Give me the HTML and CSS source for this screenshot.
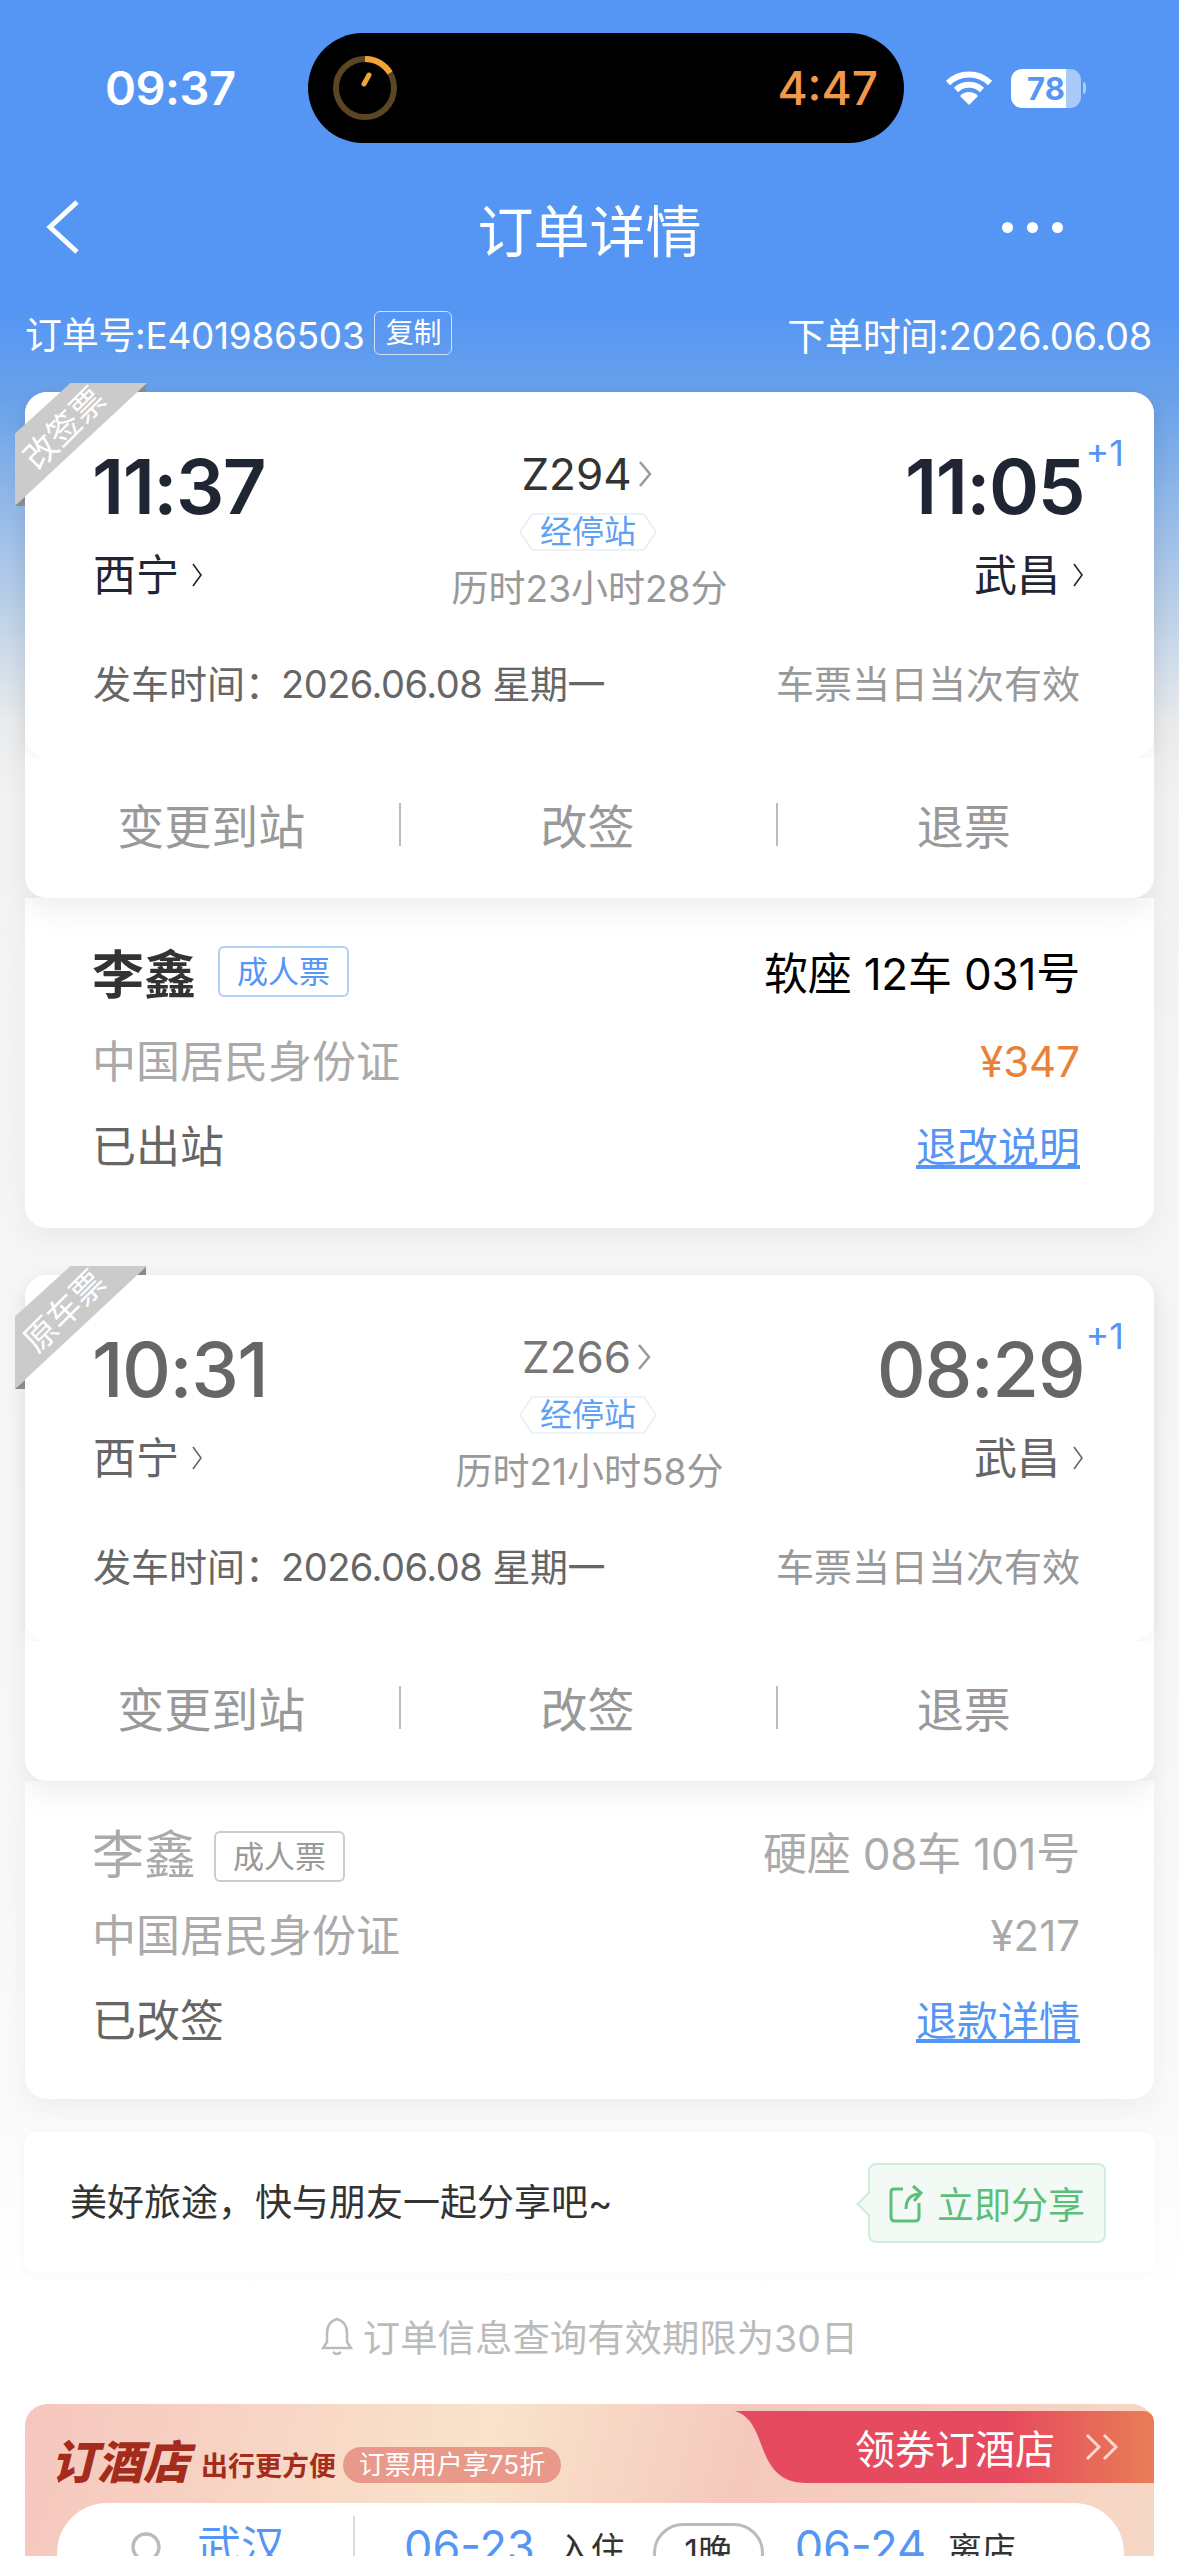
FILE: index.html
```html
<!DOCTYPE html>
<html>
<head>
    <meta charset="utf-8">
    <title>订单详情</title>
    <link rel="stylesheet" href="styles.css">
</head>
<body>
    <div class="page">
        <div class="status-bar">
            <span class="clock">09:37</span>
            <div class="island">
                <svg class="timer" width="66" height="66" viewBox="0 0 66 66">
                    <circle cx="33" cy="33" r="29" fill="none" stroke="#5a4524" stroke-width="6"/>
                    <path d="M33 4 A29 29 0 0 1 58 18" fill="none" stroke="#f2a33a" stroke-width="6"/>
                    <path d="M37 20 L32 29" fill="none" stroke="#f2a33a" stroke-width="5" stroke-linecap="round"/>
                </svg>
                <span class="timer-text">4:47</span>
            </div>
            <div class="status-right">
                <svg width="48" height="36" viewBox="0 0 48 36">
                    <path d="M3 13 A30 30 0 0 1 45 13" fill="none" stroke="#fff" stroke-width="6"/>
                    <path d="M11 20 A19 19 0 0 1 37 20" fill="none" stroke="#fff" stroke-width="6"/>
                    <path d="M24 35 L15 26 A12 12 0 0 1 33 26 Z" fill="#fff"/>
                </svg>
                <div class="battery"><span class="battery-num">78</span></div>
                <span class="battery-cap"></span>
            </div>
        </div>

        <div class="nav">
            <svg class="nav-back" width="36" height="54" viewBox="0 0 36 54">
                <path d="M32 2 L5 27 L32 52" fill="none" stroke="#fff" stroke-width="5"/>
            </svg>
            <h1 class="nav-title">订单详情</h1>
            <div class="nav-more"><i></i><i></i><i></i></div>
        </div>

        <div class="order-row">
            <div class="order-no">订单号:E401986503<span class="copy-tag">复制</span></div>
            <div class="order-time">下单时间:2026.06.08</div>
        </div>

        <div class="main">
            <!-- 改签票 -->
            <section class="ticket">
                <div class="ribbon"><div class="ribbon-band"></div><span>改签票</span></div>
                <div class="ticket-head">
                    <div class="trip">
                        <div class="side">
                            <div class="time">11:37</div>
                            <div class="station">西宁<svg class="chev" width="12" height="26" viewBox="0 0 12 26"><path d="M2 2 L10 13 L2 24" fill="none" stroke="currentColor" stroke-width="1.6"/></svg></div>
                        </div>
                        <div class="middle">
                            <div class="train">Z294<svg class="chev-gray" width="14" height="28" viewBox="0 0 14 28"><path d="M2 2 L12 14 L2 26" fill="none" stroke="#999" stroke-width="2.5"/></svg></div>
                            <div class="stops">
                                <svg class="stops-bg" width="140" height="38" viewBox="0 0 140 38"><path d="M14 1 H126 L138 19 L126 37 H14 L2 19 Z" fill="#fff" stroke="#e4eef9" stroke-width="1.5"/></svg>
                                <span>经停站</span>
                            </div>
                            <div class="duration">历时23小时28分</div>
                        </div>
                        <div class="side side-right">
                            <div class="time">11:05<span class="plus">+1</span></div>
                            <div class="station">武昌<svg class="chev" width="12" height="26" viewBox="0 0 12 26"><path d="M2 2 L10 13 L2 24" fill="none" stroke="currentColor" stroke-width="1.6"/></svg></div>
                        </div>
                    </div>
                    <div class="date-row">
                        <span class="date">发车时间：<span class="date-val">2026.06.08 星期一</span></span>
                        <span class="valid">车票当日当次有效</span>
                    </div>
                </div>
                <div class="actions">
                    <span>变更到站</span>
                    <span>改签</span>
                    <span>退票</span>
                </div>
            </section>
            <section class="passenger">
                <div class="pass-row pass-top">
                    <div class="pass-name"><b>李鑫</b><span class="pass-tag">成人票</span></div>
                    <div class="seat">软座 12车 031号</div>
                </div>
                <div class="pass-row">
                    <span class="idtype">中国居民身份证</span>
                    <span class="price">¥347</span>
                </div>
                <div class="pass-row">
                    <span class="state">已出站</span>
                    <a class="link">退改说明</a>
                </div>
            </section>

            <!-- 原车票 -->
            <section class="ticket ticket-old">
                <div class="ribbon"><div class="ribbon-band"></div><span>原车票</span></div>
                <div class="ticket-head">
                    <div class="trip">
                        <div class="side">
                            <div class="time">10:31</div>
                            <div class="station">西宁<svg class="chev" width="12" height="26" viewBox="0 0 12 26"><path d="M2 2 L10 13 L2 24" fill="none" stroke="currentColor" stroke-width="1.6"/></svg></div>
                        </div>
                        <div class="middle">
                            <div class="train">Z266<svg class="chev-gray" width="14" height="28" viewBox="0 0 14 28"><path d="M2 2 L12 14 L2 26" fill="none" stroke="#999" stroke-width="2.5"/></svg></div>
                            <div class="stops">
                                <svg class="stops-bg" width="140" height="38" viewBox="0 0 140 38"><path d="M14 1 H126 L138 19 L126 37 H14 L2 19 Z" fill="#fff" stroke="#e4eef9" stroke-width="1.5"/></svg>
                                <span>经停站</span>
                            </div>
                            <div class="duration">历时21小时58分</div>
                        </div>
                        <div class="side side-right">
                            <div class="time">08:29<span class="plus">+1</span></div>
                            <div class="station">武昌<svg class="chev" width="12" height="26" viewBox="0 0 12 26"><path d="M2 2 L10 13 L2 24" fill="none" stroke="currentColor" stroke-width="1.6"/></svg></div>
                        </div>
                    </div>
                    <div class="date-row">
                        <span class="date">发车时间：<span class="date-val">2026.06.08 星期一</span></span>
                        <span class="valid">车票当日当次有效</span>
                    </div>
                </div>
                <div class="actions">
                    <span>变更到站</span>
                    <span>改签</span>
                    <span>退票</span>
                </div>
            </section>
            <section class="passenger passenger-old">
                <div class="pass-row pass-top">
                    <div class="pass-name"><b>李鑫</b><span class="pass-tag">成人票</span></div>
                    <div class="seat">硬座 08车 101号</div>
                </div>
                <div class="pass-row">
                    <span class="idtype">中国居民身份证</span>
                    <span class="price">¥217</span>
                </div>
                <div class="pass-row">
                    <span class="state">已改签</span>
                    <a class="link">退款详情</a>
                </div>
            </section>

            <section class="share">
                <span class="share-text">美好旅途，快与朋友一起分享吧~</span>
                <div class="share-btn">
                    <svg width="36" height="40" viewBox="0 0 36 40">
                        <path d="M14 6 H5 Q2 6 2 9 V34 Q2 38 6 38 H26 Q30 38 30 34 V20" fill="none" stroke="#5bbf7b" stroke-width="3"/>
                        <path d="M17 26 Q17 12 30 11 M24 3 L32 10 L25 18" fill="none" stroke="#5bbf7b" stroke-width="3"/>
                    </svg>
                    立即分享
                </div>
            </section>

            <div class="note">
                <svg width="32" height="40" viewBox="0 0 32 40">
                    <path d="M16 3 Q6 6 6 17 V26 L2 32 H30 L26 26 V17 Q26 6 16 3 Z" fill="none" stroke="#bbb" stroke-width="2.5"/>
                    <path d="M12 36 Q16 40 20 36" fill="none" stroke="#bbb" stroke-width="2.5"/>
                </svg>
                订单信息查询有效期限为30日
            </div>

            <section class="hotel">
                <div class="hotel-head">
                    <div class="hotel-title">
                        <span class="hotel-logo">订酒店</span>
                        <span class="hotel-sub">出行更方便</span>
                        <span class="hotel-badge">订票用户享75折</span>
                    </div>
                    <div class="hotel-go">
                        <svg class="hotel-curve" width="90" height="72" viewBox="0 0 90 72"><path d="M0 0 H90 V72 H72 C38 72 32 48 24 28 C18 12 12 4 0 0 Z" fill="#e64a5e"/></svg>
                        <div class="hotel-go-body">
                            领券订酒店
                            <svg width="36" height="30" viewBox="0 0 36 30"><path d="M3 3 L15 15 L3 27 M20 3 L32 15 L20 27" fill="none" stroke="#fbd6cf" stroke-width="3"/></svg>
                        </div>
                    </div>
                </div>
                <div class="hotel-search">
                    <svg class="hotel-lens" width="32" height="40" viewBox="0 0 32 40"><circle cx="16" cy="18" r="13" fill="none" stroke="#bbb" stroke-width="3.5"/></svg>
                    <span class="hotel-city">武汉</span>
                    <span class="hotel-line"></span>
                    <span class="hotel-day">06-23</span>
                    <span class="hotel-label">入住</span>
                    <span class="hotel-nights">1晚</span>
                    <span class="hotel-day">06-24</span>
                    <span class="hotel-label">离店</span>
                </div>
            </section>
        </div>
    </div>
</body>
</html>
```

FILE: styles.css
```css
* {
    box-sizing: border-box;
}

html, body {
    margin: 0;
    padding: 0;
}

body {
    font-family: Inter, "Noto Sans CJK SC", sans-serif;
}

.page {
    width: 1179px;
    height: 2556px;
    overflow: hidden;
    background: linear-gradient(180deg, #5596f4 0, #5596f4 310px, #6aa2ea 400px, #b9cfe9 600px, #e9ebed 720px, #f3f3f3 800px, #f6f6f6 1300px, #fafafa 2100px, #fff 2300px);
}

/* status bar */
.status-bar {
    height: 172px;
    padding: 33px 0 0 105px;
    display: flex;
    align-items: flex-start;
    color: #fff;
}

.clock {
    width: 203px;
    font-size: 47px;
    font-weight: 600;
    line-height: 110px;
    letter-spacing: -.5px;
}

.island {
    width: 596px;
    height: 110px;
    background: #000;
    border-radius: 55px;
    display: flex;
    align-items: center;
    justify-content: space-between;
    padding: 0 26px 0 24px;
}

.timer-text {
    color: #f2984a;
    font-size: 46px;
    font-weight: 500;
}

.status-right {
    margin-left: 41px;
    height: 110px;
    display: flex;
    align-items: center;
}

.battery {
    margin-left: 18px;
    width: 70px;
    height: 39px;
    border-radius: 11px;
    background: linear-gradient(90deg, #fff 0, #fff 78%, #a9c9f7 78%);
    color: #5596f4;
    font-size: 31px;
    font-weight: 700;
    text-align: center;
    line-height: 39px;
}

.battery-cap {
    margin-left: 2px;
    width: 3px;
    height: 12px;
    border-radius: 0 3px 3px 0;
    background: #a9c9f7;
}

/* nav */
.nav {
    height: 110px;
    padding: 0 45px;
    display: grid;
    grid-template-columns: 1fr auto 1fr;
    align-items: center;
    color: #fff;
}

.nav-title {
    margin: 0;
    font-size: 56px;
    font-weight: 400;
}

.nav-more {
    display: flex;
    gap: 14px;
    justify-self: end;
    margin-right: 71px;
}

.nav-more i {
    width: 11px;
    height: 11px;
    border-radius: 50%;
    background: #fff;
}

.order-row {
    height: 110px;
    padding: 0 27px 8px 25px;
    display: flex;
    align-items: center;
    justify-content: space-between;
    color: #fff;
    font-size: 37px;
    letter-spacing: -.3px;
}

.order-no {
    display: flex;
    align-items: center;
}

.order-time {
    font-size: 38px;
}

.copy-tag {
    margin-left: 10px;
    width: 78px;
    height: 44px;
    border: 1px solid #cfe1fb;
    border-radius: 6px;
    font-size: 28px;
    line-height: 42px;
    text-align: center;
}

/* cards */
.main {
    padding: 0 25px;
}

.ticket {
    position: relative;
    background: #fff;
    border-radius: 22px;
    box-shadow: 0 12px 30px rgba(0, 0, 0, .07);
}

.ribbon {
    position: absolute;
    z-index: 1;
    left: -10px;
    top: -9px;
    width: 132px;
    height: 123px;
}

.ribbon::before,
.ribbon::after {
    content: "";
    position: absolute;
    width: 10px;
    height: 9px;
    background: #8a8a8a;
}

.ribbon::before {
    right: 1px;
    top: 0;
    clip-path: polygon(0 100%, 100% 0, 100% 100%);
}

.ribbon::after {
    left: 0;
    bottom: 0;
    clip-path: polygon(0 100%, 100% 0, 100% 100%);
}

.ribbon-band {
    position: absolute;
    inset: 0;
    background: #cbcbcb;
    clip-path: polygon(42% 0, 100% 0, 0 100%, 0 41%);
}

.ribbon span {
    position: absolute;
    left: -11px;
    top: 22px;
    width: 120px;
    text-align: center;
    color: #fff;
    font-size: 33px;
    line-height: 46px;
    transform: rotate(-45deg);
}

.ticket-head {
    height: 366px;
    padding: 54px 74px 0 68px;
    border-radius: 22px;
    background: #fff;
    box-shadow: 0 4px 16px rgba(0, 0, 0, .05);
}

.trip {
    display: grid;
    grid-template-columns: 1fr auto 1fr;
    height: 190px;
}

.time {
    position: relative;
    left: -1px;
    color: #1f2532;
    font-size: 76px;
    font-weight: 600;
    line-height: 80px;
    letter-spacing: -1.5px;
}

.side-right .time {
    left: 0;
}

.ticket-old .time {
    color: #666;
    font-weight: 500;
}

.station {
    margin-top: 19px;
    display: flex;
    align-items: center;
    color: #1f2532;
    font-size: 43px;
    line-height: 60px;
}

.ticket-old .station {
    color: #666;
}

.chev {
    margin-left: 12px;
}

.side-right {
    text-align: right;
    margin-right: -4px;
}

.side-right .station {
    justify-content: flex-end;
}

.plus {
    position: absolute;
    right: -40px;
    top: -13px;
    color: #5596f4;
    font-size: 36px;
    font-weight: 400;
    line-height: 40px;
    letter-spacing: 0;
}

.middle {
    display: flex;
    flex-direction: column;
    align-items: center;
}

.train {
    display: flex;
    align-items: center;
    gap: 6px;
    height: 56px;
    color: #333;
    font-size: 44px;
}

.ticket-old .train {
    color: #777;
}

.stops {
    position: relative;
    width: 140px;
    height: 38px;
    margin-top: 11px;
    margin-left: 3px;
    text-align: center;
}

.stops-bg {
    position: absolute;
    left: 0;
    top: 0;
}

.stops span {
    position: relative;
    color: #5ea0f2;
    font-size: 32px;
    line-height: 38px;
}

.duration {
    margin: 13px 0 0 6px;
    color: #999;
    font-size: 37px;
    line-height: 50px;
}

.date-row {
    margin-top: 23px;
    display: flex;
    justify-content: space-between;
    font-size: 38px;
    line-height: 50px;
}

.date {
    color: #666;
}

.date-val {
    margin-left: -2px;
    letter-spacing: -.5px;
}

.valid {
    color: #999;
}

.actions {
    height: 140px;
    border-radius: 0 0 22px 22px;
    background: #fff;
    display: grid;
    grid-template-columns: 1fr 1fr 1fr;
    align-items: center;
    color: #999;
    font-size: 47px;
    text-align: center;
    padding-bottom: 9px;
}

.actions span {
    position: relative;
    padding: 0 12px 0 8px;
}

.actions span + span::before {
    content: "";
    position: absolute;
    left: -2px;
    top: 14px;
    bottom: 12px;
    width: 2px;
    background: #bbb;
}

.passenger {
    height: 330px;
    padding: 28px 74px 0 67px;
    background: #fff;
    border-radius: 0 0 22px 22px;
    box-shadow: 0 10px 30px rgba(0, 0, 0, .05);
}

.passenger-old {
    height: 318px;
    padding-top: 25px;
}

.pass-row {
    height: 85px;
    display: flex;
    align-items: center;
    justify-content: space-between;
    font-size: 44px;
}

.pass-top {
    height: 90px;
}

.passenger-old .pass-top {
    margin-bottom: -6px;
}

.pass-name {
    display: flex;
    align-items: center;
    color: #333;
}

.pass-name b {
    font-size: 52px;
    font-weight: 700;
}

.pass-tag {
    margin-left: 22px;
    width: 131px;
    height: 51px;
    border: 2px solid #afd0f9;
    border-radius: 6px;
    color: #5596f4;
    font-size: 31px;
    line-height: 47px;
    text-align: center;
}

.seat {
    color: #000;
    font-size: 44px;
    letter-spacing: -.2px;
}

.idtype {
    color: #aaa;
}

.price {
    position: relative;
    top: 3px;
    color: #ea8138;
    font-size: 42px;
}

.state {
    color: #666;
}

.link {
    color: #5596f4;
    font-size: 41px;
    text-decoration: underline;
}

.passenger-old .pass-name,
.passenger-old .seat,
.passenger-old .price,
.passenger-old .idtype {
    color: #aaa;
}

.passenger-old .pass-name b {
    font-weight: 400;
}

.passenger-old .pass-tag {
    position: relative;
    top: 5px;
    margin-left: 18px;
    border-color: #ccc;
    color: #999;
}

.passenger + .ticket {
    margin-top: 47px;
}

.share {
    margin: 33px -1px 0;
    height: 141px;
    padding: 0 49px 6px 46px;
    background: #fff;
    border-radius: 12px;
    box-shadow: 0 2px 8px rgba(0, 0, 0, .03);
    display: flex;
    align-items: center;
    justify-content: space-between;
}

.share-text {
    color: #333;
    font-size: 37px;
}

.share-btn {
    position: relative;
    top: 3px;
    width: 238px;
    height: 80px;
    border: 2px solid #cdeeda;
    border-radius: 8px;
    background: #f3faf5;
    color: #5bbf7b;
    font-size: 37px;
    display: flex;
    align-items: center;
    justify-content: center;
    gap: 12px;
}

.share-btn::before {
    content: "";
    position: absolute;
    left: -10px;
    top: 30px;
    width: 16px;
    height: 16px;
    background: #f3faf5;
    border-left: 2px solid #cdeeda;
    border-bottom: 2px solid #cdeeda;
    transform: rotate(45deg);
}

.note {
    height: 131px;
    padding-bottom: 6px;
    display: flex;
    align-items: center;
    justify-content: center;
    gap: 10px;
    color: #bbb;
    font-size: 37.4px;
}

.hotel {
    height: 200px;
    border-radius: 22px 22px 0 0;
    background: linear-gradient(105deg, #f6c6be 0, #f9e3ca 40%, #f5c9be 62%, #f6d8c6 100%);
}

.hotel-head {
    height: 99px;
    display: flex;
    justify-content: space-between;
}

.hotel-title {
    display: flex;
    align-items: center;
    padding: 22px 0 0 26px;
    color: #a42c1c;
}

.hotel-logo {
    position: relative;
    top: -6px;
    font-size: 46px;
    font-weight: 900;
    font-style: italic;
}

.hotel-sub {
    margin-left: 12px;
    font-size: 27px;
    font-weight: 700;
}

.hotel-badge {
    margin-left: 7px;
    width: 218px;
    height: 36px;
    border-radius: 18px;
    background: #e8998a;
    color: #fff;
    font-size: 26px;
    line-height: 36px;
    text-align: center;
}

.hotel-go {
    margin-top: 7px;
    height: 72px;
    display: flex;
}

.hotel-go-body {
    width: 329px;
    height: 72px;
    border-radius: 0 10px 0 0;
    background: linear-gradient(90deg, #e64a5e 0, #e64a5e 55%, #e97d57 100%);
    color: #fff;
    font-size: 40px;
    display: flex;
    align-items: center;
    padding-left: 30px;
    gap: 29px;
}

.hotel-search {
    margin: 0 30px 0 32px;
    height: 110px;
    padding: 14px 0 0 73px;
    background: #fff;
    border-radius: 50px 50px 0 0;
    display: flex;
    align-items: flex-start;
    font-size: 34px;
    color: #333;
}

.hotel-city,
.hotel-day {
    color: #5596f4;
    font-size: 45px;
    line-height: 60px;
}

.hotel-lens {
    margin-top: 12px;
}

.hotel-city {
    margin-left: 35px;
    font-size: 44px;
}

.hotel-line {
    margin: -1px 49px 0 68px;
    width: 2px;
    height: 60px;
    background: #ddd;
}

.hotel-label {
    margin-left: 22px;
    line-height: 66px;
}

.hotel-nights {
    margin: 6px 31px 0 28px;
    width: 111px;
    height: 60px;
    border: 3px solid #bbb;
    border-radius: 30px;
    text-align: center;
    line-height: 52px;
}
```
